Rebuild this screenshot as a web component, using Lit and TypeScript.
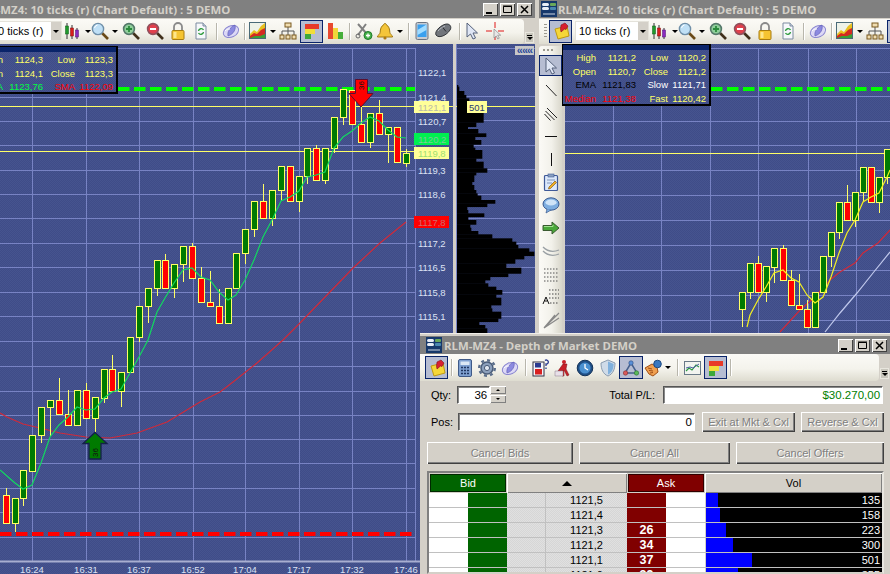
import {LitElement, css, html, svg} from 'lit';
import {customElement} from 'lit/decorators.js';
import {classMap} from 'lit/directives/class-map.js';

type Candle = [number, number, number, number?, number?];
type Tool = {i?: string; w: number; sep?: boolean; drop?: boolean; on?: boolean};

// x, body top, body bottom, wick high, wick low (page pixels)
const leftGreen: Candle[] = [
  [15, 498, 523, 0, 532], [23, 470, 498, 0, 506], [32, 435, 471], [41, 407, 435, 0, 443],
  [50, 400, 407, 0, 436], [77, 390, 425], [95, 397, 418, 0, 432], [104, 369, 398, 0, 403],
  [121, 372, 391, 0, 407], [130, 337, 372], [139, 306, 337, 0, 342], [148, 288, 306, 0, 323],
  [157, 260, 288, 0, 296], [174, 264, 288, 0, 298], [183, 246, 264, 0, 282], [228, 288, 323],
  [236, 253, 288], [245, 229, 253, 0, 264], [254, 201, 229, 0, 237], [272, 190, 218, 0, 226],
  [281, 166, 190, 0, 201], [299, 176, 201, 0, 212], [307, 148, 176, 0, 184], [325, 148, 180, 0, 184],
  [334, 117, 148, 0, 153], [343, 89, 117, 0, 125], [370, 113, 142, 0, 148], [388, 127, 134, 0, 163],
  [406, 153, 163, 149, 167],
];
const leftRed: Candle[] = [
  [6, 495, 523, 488], [59, 400, 414, 378], [68, 414, 425, 390], [86, 390, 418, 383],
  [112, 369, 391, 355], [165, 260, 288, 254], [192, 246, 278, 243], [201, 278, 302, 267],
  [210, 302, 306, 271], [219, 306, 323, 289], [263, 201, 218, 184], [290, 166, 201],
  [316, 148, 180, 145], [352, 90, 124], [361, 124, 142, 107], [379, 113, 134, 100], [397, 127, 162],
];
const rightGreen: Candle[] = [
  [742, 292, 309, 0, 327], [750, 263, 292, 0, 299], [766, 266, 292, 0, 302], [774, 248, 267, 0, 283],
  [815, 292, 327], [823, 256, 292], [831, 232, 256, 0, 267], [839, 202, 232, 0, 239],
  [855, 192, 220, 0, 227], [863, 167, 192, 0, 202], [879, 177, 202, 0, 213], [887, 149, 177, 0, 184],
];
const rightRed: Candle[] = [
  [758, 263, 292, 256], [783, 248, 280, 245], [791, 280, 305, 270], [799, 305, 309, 274],
  [807, 309, 327, 300], [847, 202, 220, 185], [871, 167, 202],
];

const leftEma = '0,470 15,483 23,489 32,485 41,463 50,437 59,425 68,417 77,407 86,410 95,409 104,398 112,392 121,389 130,373 139,357 148,340 157,312 165,298 174,283 183,270 192,268 201,277 210,280 219,292 228,300 236,295 245,280 254,260 263,237 272,220 281,201 290,197 299,191 307,177 316,175 325,172 334,148 343,137 352,131 361,123 370,117 379,121 388,130 397,137 406,138';
const leftSma = '0,413 7,417 23,424 40,428 60,433 86,437 110,438 137,433 167,422 200,402 220,392 233,382 257,363 283,340 300,323 327,295 353,268 380,243 406,222';
const rightEma = '747,327 750,315 758,300 766,287 774,273 783,270 791,278 799,282 807,295 815,303 823,297 831,277 839,253 847,233 855,220 863,202 871,197 879,193 887,177 890,170';
const rightRedLine = '780,332 800,310 815,297 830,280 840,272 855,263 863,253 878,243 890,230';
const rightWhite = '825,332 840,313 857,293 873,273 890,252';

const priceTicks: [number, string][] = [
  [72, '1122,1'], [97, '1121,4'], [121, '1120,7'], [170, '1119,3'], [194, '1118,6'],
  [243, '1117,2'], [267, '1116,5'], [292, '1115,8'], [316, '1115,1'],
];
const priceFlags: [number, string, string, string][] = [
  [101, '1121,1', '#ffff99', '#b9b9a8'], [133, '1120,2', '#00f050', '#7ec89a'],
  [147, '1119,8', '#ffff99', '#a0e070'], [216, '1117,8', '#ff0000', '#d06a6a'],
];
const timeTicks: [number, string][] = [
  [32, '16:24'], [86, '16:31'], [139, '16:37'], [193, '16:52'],
  [245, '17:04'], [299, '17:17'], [352, '17:32'], [406, '17:46'],
];
const leftHLines = [48, 72, 97, 121, 145, 170, 194, 218, 243, 267, 292, 316, 341, 366, 391, 415, 439, 463, 488, 512, 537];
const rightHLines = [48, 72, 96, 121, 145, 170, 195, 220, 245, 270, 295, 320];
const profileLines = [48, 72, 96, 120, 145, 169, 194, 218, 243, 267, 292, 316];

// bottom edge and right edge of each volume step, in 3x crop pixels
const profile: [number, number][] = [
  [5, 24], [18, 27], [30, 42], [40, 48], [48, 57], [112, 100], [125, 78], [132, 53], [145, 84], [155, 108],
  [165, 75], [178, 93], [188, 70], [195, 75], [220, 96], [230, 78], [250, 100], [262, 111], [270, 78], [290, 72],
  [300, 66], [315, 72], [325, 78], [332, 82], [345, 93], [355, 135], [365, 111], [375, 51], [385, 54], [395, 102],
  [405, 54], [418, 78], [428, 60], [438, 63], [448, 84], [460, 126], [470, 186], [480, 198], [490, 204], [500, 237],
  [512, 252], [522, 222], [535, 195], [548, 168], [565, 213], [575, 174], [585, 120], [595, 105], [605, 114], [615, 138],
  [628, 156], [638, 138], [660, 153], [670, 123], [680, 126], [700, 153], [710, 144], [720, 87], [730, 105], [745, 111],
];

const domRows = [
  {p: '1121,5', a: '', v: 135},
  {p: '1121,4', a: '', v: 158},
  {p: '1121,3', a: '26', v: 223},
  {p: '1121,2', a: '34', v: 300},
  {p: '1121,1', a: '37', v: 501},
  {p: '1121,0', a: '39', v: 355},
];

const icons: Record<string, unknown> = {
  candles: svg`<path d="M3 1v16M8 3v14M13 6v11" stroke="#333"/><rect x="1.5" y="4" width="3" height="8" fill="#1f9a2c" stroke="#0b5a14" stroke-width=".5"/><rect x="6.5" y="6" width="3" height="8" fill="#d81c1c" stroke="#7a0a0a" stroke-width=".5"/><rect x="11.5" y="8" width="3" height="7" fill="#8a2bc0" stroke="#4d1070" stroke-width=".5"/>`,
  mag: svg`<path d="M11 11l6 6" stroke="#6a4a18" stroke-width="2.6"/><circle cx="7" cy="7" r="5.6" fill="#bfe0f6" stroke="#6f8fa8" stroke-width="1.4"/><path d="M3.5 6a4 4 0 0 1 3-3" stroke="#fff" fill="none"/>`,
  zin: svg`<path d="M11 11l6 6" stroke="#40301c" stroke-width="2.6"/><circle cx="7" cy="7" r="5.4" fill="#8fcf9a" stroke="#55786a" stroke-width="1.6"/><path d="M4 7h6M7 4v6" stroke="#2b8a3c" stroke-width="1.8"/>`,
  zout: svg`<path d="M11 11l6 6" stroke="#40301c" stroke-width="2.6"/><circle cx="7" cy="7" r="5.4" fill="#e0404c" stroke="#90505c" stroke-width="1.6"/><path d="M4 7h6" stroke="#fff" stroke-width="2"/>`,
  lock: svg`<path d="M5 9V5a4 4 0 0 1 8 0v4" fill="none" stroke="#8a8a8a" stroke-width="1.8"/><rect x="3" y="8.5" width="12" height="9" rx="1" fill="#f5c431" stroke="#a87c10"/><rect x="4.5" y="10" width="3" height="6" fill="#fde68a"/>`,
  doc: svg`<path d="M4 1h7l3 3v13H4z" fill="#f6f8fb" stroke="#7d8ba0"/><path d="M11 1v3h3" fill="#cdd6e2" stroke="#7d8ba0"/><path d="M6.5 9a2.7 2.7 0 0 1 5-1M11.5 10a2.7 2.7 0 0 1-5 1" fill="none" stroke="#2c9a3a" stroke-width="1.4"/>`,
  disc: svg`<ellipse cx="9" cy="9.5" rx="8" ry="5.6" transform="rotate(-25 9 9.5)" fill="#dcd8f6" stroke="#8a86d0"/><path d="M6 14c-1-4 2-9 7-11 1 4-1 9-7 11z" fill="#8c8ae0" stroke="#5a58b0" stroke-width=".6"/><path d="M3 9c2-2 3-2 5-2" stroke="#fff" fill="none"/>`,
  chart: svg`<rect x=".5" y=".5" width="16" height="16" fill="#eef2e8" stroke="#4a6a78"/><path d="M1 16V12l4-4 3 2 4-6 4-3v15z" fill="#e8c020"/><path d="M1 16v-2l4-3 3 1 4-4 4-2v10z" fill="#d42a20"/><path d="M1 16l5-2 5 0 5-2v4z" fill="#3aa034"/>`,
  hier: svg`<path d="M9 5v4M3 13V9h12v4M9 9v4" stroke="#555" fill="none"/><rect x="6" y="1" width="6" height="4" fill="#f0ddb0" stroke="#7a5a20"/><rect x="1" y="13" width="4" height="4" fill="#f0ddb0" stroke="#7a5a20"/><rect x="7" y="13" width="4" height="4" fill="#f0ddb0" stroke="#7a5a20"/><rect x="13" y="13" width="4" height="4" fill="#f0ddb0" stroke="#7a5a20"/>`,
  colors: svg`<rect x="2" y="2" width="14" height="5" fill="#e83a28"/><rect x="2" y="7" width="10" height="5" fill="#f2de3a"/><rect x="2" y="12" width="6" height="5" fill="#3ca83a"/>`,
  bars: svg`<rect x="2" y="1" width="5" height="16" fill="#e84a30"/><rect x="7" y="6" width="5" height="11" fill="#f2d83a"/><rect x="12" y="10" width="5" height="7" fill="#46ae3a"/>`,
  tool: svg`<path d="M3 2l9 10M11 2L3 13" stroke="#808080" stroke-width="2"/><circle cx="3" cy="14" r="2" fill="none" stroke="#666"/><circle cx="13" cy="13.5" r="4" fill="#46b04a" stroke="#1d7a2a"/><path d="M11 13.5h4M13 11.5v4" stroke="#fff" stroke-width="1.3"/>`,
  bell: svg`<path d="M9 1.5c1 0 1.5 1 1.5 1.6 2.6 1 3 4 3.4 7.4.2 1.6 1.6 2.5 2.6 3.5v1H1.5v-1c1-1 2.4-1.900 2.600-3.500.4-3.400.8-6.400 3.400-7.400C7.500 2.500 8 1.500 9 1.500z" fill="#f4c53a" stroke="#a07a14"/><circle cx="9" cy="16" r="1.600" fill="#b07a10"/>`,
  phone: svg`<rect x="3" y=".5" width="12" height="17" rx="1.500" fill="#c8ccd2" stroke="#6c7480"/><rect x="4.500" y="2.500" width="9" height="12.500" fill="#3aa0ee"/><path d="M4.500 8l9-5.500V8l-9 5z" fill="#a0dcff"/>`,
  mouse: svg`<path d="M2 13C0 9 8 2 13 2c3 0 5 3 3 6-3 5-11 9-14 5z" fill="#72767c" stroke="#33363a"/><path d="M8 4.500l4 5" stroke="#2a2c30"/><path d="M4 9c2-2 4-4 7-5" stroke="#b8bcc2" fill="none"/>`,
  cursor: svg`<path d="M4 1v14l3.500-3 2.500 5 2.500-1-2.500-5h4.500z" fill="#dfe6f5" stroke="#54607a"/>`,
  cross: svg`<path d="M9 0v6M9 12v6M0 9h6M12 9h6" stroke="#e01818"/><path d="M8 7v9l2.200-2 1.600 3 1.500-.8-1.600-3h3z" fill="#e8e8e8" stroke="#8a8a8a" stroke-width=".7"/>`,
  pin: svg`<path d="M3 7l12-3 2 10-11 3z" fill="#f5d638" stroke="#c09a10"/><path d="M9 3l4-2 3 3-2 3.500-1.500-.5L9 10l-.5-3z" fill="#d82030" stroke="#80101c" stroke-width=".6"/>`,
  calc: svg`<rect x="2.500" y=".5" width="13" height="17" rx="1.500" fill="#7fa0d0" stroke="#3f5a88"/><rect x="4.500" y="2.500" width="9" height="3.500" fill="#dce8f5"/><path d="M5 8.500h2M8 8.500h2M11 8.500h2M5 11.500h2M8 11.500h2M11 11.500h2M5 14.500h2M8 14.500h2M11 14.500h2" stroke="#1f3560" stroke-width="1.600"/>`,
  gear: svg`<circle cx="9" cy="9" r="6" fill="#8ca0bc" stroke="#4a5c78" stroke-width="1.500"/><circle cx="9" cy="9" r="7.800" fill="none" stroke="#5c6f8c" stroke-width="2.400" stroke-dasharray="3 3.100"/><circle cx="9" cy="9" r="2.600" fill="#dfe6f0" stroke="#4a5c78"/>`,
  note12: svg`<rect x="2" y="3" width="11" height="14" fill="#f4f4fa" stroke="#334"/><rect x="4" y="4" width="6" height="4.500" fill="#2a3a90"/><rect x="4" y="10" width="7" height="5.500" fill="#d82020"/><path d="M14 1.500a2 2 0 1 1 1 3.500v2M15 8.500v1.500" stroke="#2a3a90" stroke-width="1.300" fill="none"/>`,
  figure: svg`<circle cx="11" cy="3" r="2" fill="#c82028"/><path d="M10 5l-5 7 2 1 2-2v6h2v-6l3 6 2-1-3-6 1-5z" fill="#c82028" stroke="#701014" stroke-width=".5"/><path d="M2 12h8v5H2z" fill="#e8e0e8" stroke="#8a7a8a" stroke-width=".5"/>`,
  clock: svg`<circle cx="9" cy="9" r="7.800" fill="#1f4f86" stroke="#143358"/><circle cx="9" cy="9" r="5.600" fill="#4a90d0"/><path d="M9 5v4l3 2" stroke="#fff" stroke-width="1.300" fill="none"/>`,
  shield: svg`<path d="M9 1l7 3c0 6-2 11-7 13C4 15 2 10 2 4z" fill="#cfdbe8" stroke="#8a9cb0"/><path d="M9 2.500l5.600 2.400C14.500 10 13 13.500 9 15.500z" fill="#7fb0dc"/>`,
  tri: svg`<path d="M9 4L3 14h12z" fill="none" stroke="#46608c" stroke-width="1.500"/><circle cx="9" cy="4" r="2.200" fill="#5a90d8" stroke="#2a4a80" stroke-width=".6"/><circle cx="3.500" cy="14" r="2.200" fill="#d85a5a" stroke="#803030" stroke-width=".6"/><circle cx="14.500" cy="14" r="2.200" fill="#5ab85a" stroke="#2a7030" stroke-width=".6"/>`,
  hand: svg`<path d="M1 9l7-4 5 3 1 5-5 4-4-2z" fill="#f0a050" stroke="#a05018"/><path d="M4 9l4 1M5 11.500l4 .5M6 14l3-.5" stroke="#a05018"/><circle cx="13.500" cy="5" r="3.800" fill="#3a78c0" stroke="#1f4a80"/>`,
  line: svg`<rect x=".5" y="2.500" width="16" height="13" fill="#f2f4f0" stroke="#6a7a88"/><path d="M2 12l3-3 3 2 4-5 3 2" fill="none" stroke="#2a9a40" stroke-width="1.200"/><path d="M2 9l4-1 3 1 6-4" fill="none" stroke="#4a60a0"/>`,
  dline: svg`<path d="M4 4l10.500 11" stroke="#222"/>`,
  mline: svg`<path d="M5 4l10 10M3.500 7l9 9M2.500 10l6 6.500" stroke="#222"/>`,
  hline: svg`<path d="M3 9.500h12" stroke="#111"/>`,
  vline: svg`<path d="M9.500 3v13" stroke="#111"/>`,
  clip: svg`<rect x="2.500" y="2.500" width="13" height="15" rx="1" fill="#dce8fa" stroke="#3f5a98" stroke-width="1.200"/><rect x="6" y="1" width="6" height="3" fill="#8aa0c0" stroke="#3f5a98" stroke-width=".6"/><path d="M5 7h8M5 10h5" stroke="#7f94b8"/><path d="M7 14l6-6 1.500 1.500-6 6-2 .5z" fill="#f2b020" stroke="#704a10" stroke-width=".6"/>`,
  bubble: svg`<ellipse cx="9" cy="8" rx="8" ry="6.200" fill="#7eaee0" stroke="#3a5a90"/><ellipse cx="9" cy="6.500" rx="5.600" ry="3" fill="#cfe4f8"/><path d="M5 13l-1 4 5-3" fill="#7eaee0" stroke="#3a5a90" stroke-width=".7"/>`,
  arrow: svg`<path d="M1 6.500h9V3l7 6-7 6v-3.500H1z" fill="#4aa83a" stroke="#3a5a30"/><path d="M2 7.500h9V6" stroke="#a0e090" fill="none"/>`,
  curves: svg`<path d="M1 5c5 5 11 5 16 3M1 9c5 5 11 5 16 3" fill="none" stroke="#9aa0a4" stroke-width="1.300"/>`,
  dots: svg`<path d="M2 4h14M2 8h14M2 12h14M2 16h14" stroke="#555" stroke-dasharray="1.500 1.500"/>`,
  fib: svg`<path d="M7 2h10M7 6h10M7 10h10" stroke="#444" stroke-dasharray="1.500 1.500"/><path d="M1 16l3-7 3 7M2.500 13h3" fill="none" stroke="#111"/><path d="M8 15h9" stroke="#444" stroke-dasharray="1.500 1.500"/>`,
  fan: svg`<path d="M2 17L17 2M2 17L17 7M2 17l11-13" stroke="#888" stroke-width="1.200"/>`,
};

const chartTools: Tool[] = [
  {i: 'candles', w: 25, drop: true}, {i: 'mag', w: 29, drop: true}, {i: 'zin', w: 24}, {i: 'zout', w: 23},
  {i: 'lock', w: 23}, {i: 'doc', w: 23}, {sep: true, w: 8}, {i: 'disc', w: 21}, {sep: true, w: 7},
  {i: 'chart', w: 28, drop: true}, {i: 'hier', w: 24}, {i: 'colors', w: 23, on: true}, {i: 'bars', w: 23},
  {sep: true, w: 6}, {i: 'tool', w: 23}, {i: 'bell', w: 29, drop: true}, {sep: true, w: 8},
  {i: 'phone', w: 20}, {i: 'mouse', w: 22}, {sep: true, w: 10}, {i: 'cursor', w: 16}, {i: 'cross', w: 30},
];
const domTools: Tool[] = [
  {i: 'pin', w: 23, on: true}, {sep: true, w: 6}, {i: 'calc', w: 21}, {i: 'gear', w: 23}, {i: 'disc', w: 23},
  {sep: true, w: 8}, {i: 'note12', w: 21}, {i: 'figure', w: 23}, {i: 'clock', w: 24}, {i: 'shield', w: 22},
  {i: 'tri', w: 24, on: true}, {i: 'hand', w: 29, drop: true}, {sep: true, w: 10}, {i: 'line', w: 22},
  {i: 'colors', w: 23, on: true}, {sep: true, w: 6},
];
const drawTools = ['dline', 'mline', 'hline', 'vline', 'clip', 'bubble', 'arrow', 'curves', 'dots', 'fib', 'fan'];

const icon = (name: string) =>
  html`<svg class="ico" viewBox="0 0 18 18">${icons[name]}</svg>`;

const candle = ([x, top, bot, hi, lo]: Candle, fill: string) => {
  const cx = Math.round(x) + 0.5;
  return svg`
    <path d="M${cx} ${hi || top}V${lo || bot}" class="wick"/>
    <rect class="body" x=${cx - 3} y=${top + 0.5} width="6" height=${bot - top} fill=${fill}/>`;
};

@customElement('app-root')
export class AppRoot extends LitElement {
  static styles = css`
    :host {
      display: block;
      position: relative;
      width: 890px;
      height: 574px;
      overflow: hidden;
      background: #d4d0c8;
      font: 11px 'Liberation Sans', Arial, sans-serif;
      color: #000;
    }

    svg {
      display: block;
    }

    .window {
      position: absolute;
      top: 0;
      display: flex;
      flex-direction: column;
      overflow: hidden;
      background: #d4d0c8;
    }

    .w-left {
      left: 0;
      width: 535px;
      height: 574px;
    }

    .w-right {
      left: 539px;
      width: 351px;
      height: 333px;
    }

    .w-dom {
      left: 420px;
      top: 333px;
      width: 470px;
      height: 241px;
      padding-top: 2px;
      box-sizing: border-box;
      border-top: 1px solid #f0eee8;
    }

    .title {
      flex: none;
      display: flex;
      align-items: center;
      height: 18px;
      background: #808080;
      color: #d4d0c8;
      font: bold 11.4px 'Open Sans', 'Liberation Sans', sans-serif;
      white-space: nowrap;
      overflow: hidden;
    }

    .title-clip {
      margin-left: -28px;
    }

    .logo {
      flex: none;
      width: 16px;
      height: 16px;
      margin: 0 1px 0 2px;
    }

    .w-dom .logo {
      margin: 0 2px 0 6px;
    }

    .caps {
      margin-left: auto;
      display: flex;
      padding-right: 3px;
    }

    .cap {
      width: 15px;
      height: 13px;
      margin-left: 2px;
      background: #d4d0c8;
      box-shadow: inset 1px 1px 0 #fff, inset -1px -1px 0 #404040;
    }

    .toolbar {
      flex: none;
      display: flex;
      align-items: center;
      height: 26px;
      background: #d4d0c8;
    }

    .strip {
      display: flex;
      align-items: center;
      height: 25px;
      background: linear-gradient(#fbfaf6, #f4f3ec 55%, #dedcd0);
      border-radius: 0 4px 4px 0;
    }

    .w-left .strip {
      width: 524px;
      padding-left: 0;
    }

    .w-right .strip {
      width: 351px;
      padding-left: 5px;
      border-radius: 0;
    }

    .w-dom .strip {
      width: 454px;
      padding-left: 5px;
      height: 27px;
    }

    .w-dom .toolbar {
      height: 27px;
    }

    .grip {
      flex: none;
      width: 3px;
      height: 14px;
      margin-right: 2px;
      background: repeating-linear-gradient(#9c9a90 0 1px, transparent 1px 3px);
    }

    .btn {
      flex: none;
      display: flex;
      align-items: center;
      justify-content: center;
      gap: 3px;
      height: 23px;
      box-sizing: border-box;
    }

    .btn.on {
      background: #b6bdd2;
      border: 1px solid #0a246a;
    }

    .ico {
      flex: none;
      width: 18px;
      height: 18px;
    }

    .caret {
      flex: none;
      width: 0;
      height: 0;
      border: 3px solid transparent;
      border-top: 3px solid #000;
      border-bottom: 0;
    }

    .sep {
      flex: none;
      display: flex;
      justify-content: center;
    }

    .sep::before {
      content: '';
      width: 1px;
      height: 17px;
      background: #b8b6ac;
      box-shadow: 1px 0 0 #fff;
    }

    .combo {
      flex: none;
      display: flex;
      width: 74px;
      height: 20px;
      margin-right: 3px;
      box-sizing: border-box;
      background: #fff;
      border: 1px solid #e4e2da;
      line-height: 19px;
      font-size: 11px;
      white-space: nowrap;
      overflow: hidden;
    }

    .w-left .combo {
      margin-left: -12px;
    }

    .combo span {
      flex: 1;
      padding-left: 3px;
    }

    .combo i {
      flex: none;
      width: 10px;
      display: flex;
      align-items: center;
      justify-content: center;
      background: #d4d0c8;
    }

    .more {
      flex: none;
      width: 9px;
      height: 11px;
      margin: 12px 0 0 1px;
      background: #c8c6bc;
      border: 1px solid #e8e6de;
      box-sizing: border-box;
      display: flex;
      flex-direction: column;
      align-items: center;
      justify-content: center;
      gap: 1px;
    }

    .more::before {
      content: '';
      width: 5px;
      height: 1px;
      background: #000;
    }

    .body-row {
      flex: 1;
      display: flex;
      min-height: 0;
    }

    .plot {
      position: relative;
      flex: none;
      background: repeating-conic-gradient(#3f4c88 0 25%, #46548f 0 50%) 0 0 / 2px 2px;
    }

    .plot-left {
      width: 453px;
      margin-right: 3px;
    }

    .plot-profile {
      width: 79px;
    }

    .plot-right {
      width: 325px;
      margin-left: 3px;
    }

    .grid line {
      stroke: #7883c4;
      stroke-width: 1;
      shape-rendering: crispEdges;
    }

    .wick {
      stroke: #ffff66;
      stroke-width: 1;
      fill: none;
      shape-rendering: crispEdges;
    }

    .body {
      stroke: #ffff66;
      stroke-width: 1;
      shape-rendering: crispEdges;
    }

    .series {
      fill: none;
      stroke-width: 1.2;
    }

    .hl {
      stroke: #ffff66;
      stroke-width: 1;
      shape-rendering: crispEdges;
    }

    .dash {
      stroke-width: 4;
      stroke-dasharray: 11.5 4.5;
    }

    .tick {
      font: 9.5px 'Liberation Sans', sans-serif;
      fill: #dce2f4;
    }

    .flag {
      font: 9.5px 'Liberation Sans', sans-serif;
    }

    .stamp {
      font: 8px 'Liberation Sans', sans-serif;
      fill: #111;
    }

    .info {
      position: absolute;
      width: 149px;
      box-sizing: border-box;
      border: 1px solid #000;
      border-right-width: 2px;
      border-bottom-width: 2px;
      padding-top: 6px;
      background: repeating-conic-gradient(#3f4c88 0 25%, #46548f 0 50%) 0 0 / 2px 2px;
      font-size: 9.5px;
      line-height: 13.6px;
    }

    .info::before {
      content: '';
      position: absolute;
      top: 0;
      left: 0;
      right: 0;
      height: 5px;
      background: #0a246a;
    }

    .info-row {
      display: grid;
      grid-template-columns: 33px 40px 32px 38px;
      text-align: right;
      white-space: nowrap;
      color: #ffff66;
    }

    .info-left {
      left: -31px;
      top: 2px;
      height: 48px;
    }

    .info-right {
      left: -3px;
      top: 0;
      height: 62px;
    }

    .fg-green {
      color: #00ff40;
    }

    .fg-red {
      color: #ff0000;
    }

    .fg-black {
      color: #000;
    }

    .fg-white {
      color: #fff;
    }

    .collapse {
      position: absolute;
      top: 2px;
      right: 1px;
      width: 19px;
      height: 9px;
      background: #c8c8c8;
      color: #2b4a9a;
      font: bold 11px/8px 'Liberation Sans', sans-serif;
      text-align: center;
      letter-spacing: -1px;
      overflow: hidden;
    }

    .vbar {
      flex: none;
      width: 23px;
      height: 287px;
      margin-top: 2px;
      padding-top: 8px;
      box-sizing: border-box;
      position: relative;
      background: linear-gradient(90deg, #fbfaf6, #f2f1ea 55%, #d8d6ca);
      border-radius: 3px 3px 0 0;
    }

    .vbar::before {
      content: '';
      position: absolute;
      top: 3px;
      left: 4px;
      width: 11px;
      height: 2px;
      background: repeating-linear-gradient(90deg, #9c9a90 0 2px, transparent 2px 4px);
    }

    .vitem {
      height: 23px;
      display: flex;
      align-items: center;
      justify-content: center;
    }

    .vitem.on {
      height: 21px;
      margin-bottom: 2px;
      margin-top: 1px;
      box-sizing: border-box;
      background: #b6bdd2;
      border: 1px solid #0a246a;
    }

    .form {
      padding: 4px 6px 0 6px;
      display: flex;
      flex-direction: column;
    }

    .f-row {
      display: flex;
      align-items: center;
    }

    .f-qty {
      height: 19px;
    }

    .f-pos {
      height: 20px;
      margin-top: 8px;
    }

    .f-cancel {
      height: 22px;
      margin-top: 10px;
      gap: 6px;
      margin-left: 1px;
    }

    .lbl {
      flex: none;
      padding-left: 5px;
      white-space: nowrap;
    }

    .field {
      box-sizing: border-box;
      height: 18px;
      background: #fff;
      border: 1px solid;
      border-color: #555 #fff #fff #555;
      box-shadow: inset 1px 1px 0 #888;
      padding-right: 2px;
      text-align: right;
      line-height: 16px;
      font-size: 11.5px;
    }

    .qty {
      width: 33px;
      margin-left: 6px;
    }

    .spin {
      flex: none;
      width: 16px;
      height: 17px;
      display: flex;
      flex-direction: column;
      gap: 1px;
    }

    .spin i {
      flex: 1;
      display: flex;
      align-items: center;
      justify-content: center;
      background: #d4d0c8;
      box-shadow: inset 1px 1px 0 #fff, inset -1px -1px 0 #808080;
    }

    .tri-up,
    .tri-dn {
      width: 0;
      height: 0;
      border: 2px solid transparent;
    }

    .tri-up {
      border-bottom: 2px solid #000;
      border-top: 0;
    }

    .tri-dn {
      border-top: 2px solid #000;
      border-bottom: 0;
    }

    .total-lbl {
      margin-left: 98px;
    }

    .total {
      width: 220px;
      margin-left: 8px;
      color: #008000;
    }

    .pos {
      width: 238px;
      margin-left: 5px;
    }

    .cmd {
      flex: none;
      box-sizing: border-box;
      display: flex;
      align-items: center;
      justify-content: center;
      background: #d4d0c8;
      box-shadow: inset 1px 1px 0 #fff, inset -1px -1px 0 #404040, inset -2px -2px 0 #808080;
      color: #808080;
      text-shadow: 1px 1px 0 #fff;
      height: 100%;
      white-space: nowrap;
    }

    .c-exit {
      width: 93px;
      margin-left: 7px;
    }

    .c-rev {
      width: 83px;
      margin-left: 6px;
    }

    .c-bids {
      width: 146px;
    }

    .c-all {
      width: 151px;
    }

    .c-off {
      width: 148px;
    }

    .ladder {
      margin: 7px 6px 0 7px;
      border: 2px solid;
      border-color: #808080 #e8e6e0 transparent #808080;
      overflow: hidden;
      flex: 1;
      background: #d4d0c8;
    }

    .lhead {
      display: grid;
      grid-template-columns: 78px 120px 78px 1fr;
      height: 20px;
    }

    .lhead > div {
      display: flex;
      align-items: center;
      justify-content: center;
      box-shadow: inset 1px 1px 0 #fff, inset -1px -1px 0 #808080;
    }

    .h-bid {
      color: #fff;
      background: #006400;
      box-shadow: inset 0 0 0 1px #002800 !important;
      border: 1px solid #d4d0c8;
    }

    .h-ask {
      color: #fff;
      background: #800000;
      box-shadow: inset 0 0 0 1px #300000 !important;
      border: 1px solid #d4d0c8;
    }

    .sort {
      width: 0;
      height: 0;
      border: 5px solid transparent;
      border-bottom: 5px solid #000;
      border-top: 0;
    }

    .lrow {
      display: grid;
      grid-template-columns: 39px 39px 39px 81px 39px 39px 1fr;
      height: 15px;
      box-sizing: border-box;
      border-bottom: 1px solid #c0c0c0;
      line-height: 14px;
    }

    .c-white {
      background: #fff;
    }

    .c-green {
      background: #006400;
    }

    .c-grey {
      background: repeating-conic-gradient(#d6d6d6 0 25%, #e0e0e0 0 50%) 0 0 / 2px 2px;
      border-right: 1px solid #c0c0c0;
    }

    .c-price {
      background: repeating-conic-gradient(#d6d6d6 0 25%, #e0e0e0 0 50%) 0 0 / 2px 2px;
      text-align: center;
    }

    .c-ask {
      background: #800000;
      color: #fff;
      font-weight: bold;
      font-size: 12.5px;
      text-align: center;
    }

    .c-vol {
      position: relative;
      background: #000;
      color: #fff;
      text-align: right;
      padding-right: 2px;
      margin-left: 1px;
    }

    .c-vol i {
      position: absolute;
      left: 0;
      top: 0;
      bottom: 0;
      background: #0000ff;
    }

    .c-vol span {
      position: relative;
    }

    .pin-gap {
      flex: none;
      width: 3px;
    }

    .btn-pin {
      width: 23px;
    }
  `;

  renderCaps() {
    return html`<div class="caps">
      <div class="cap"><svg width="15" height="13"><path d="M3 10h6" stroke="#000" stroke-width="2"/></svg></div>
      <div class="cap"><svg width="15" height="13"><path d="M3.500 3.500h8v6h-8zM3 3h9" stroke="#000" fill="none"/></svg></div>
      <div class="cap"><svg width="15" height="13"><path d="M4 3l7 7M11 3l-7 7" stroke="#000" stroke-width="1.500"/></svg></div>
    </div>`;
  }

  renderLogo() {
    return html`<svg class="logo" viewBox="0 0 16 16">
      <rect width="16" height="16" fill="#16386a"/>
      <rect x="1" y="2" width="7" height="3" rx="1.500" fill="#e8eef6"/>
      <rect x="1" y="6" width="7" height="3" rx="1.500" fill="#e8eef6"/>
      <rect x="9" y="2" width="6" height="3" rx="1" fill="#6aa85a"/>
      <rect x="9" y="6" width="6" height="3" rx="1" fill="#4a88b0"/>
      <path d="M2 13h12" stroke="#cfd8e4"/>
    </svg>`;
  }

  renderTools(tools: Tool[]) {
    return tools.map((t) =>
      t.sep
        ? html`<div class="sep" style="width:${t.w}px"></div>`
        : html`<div class=${classMap({btn: true, on: !!t.on})} style="width:${t.w}px">
            ${icon(t.i!)}${t.drop ? html`<span class="caret"></span>` : ''}
          </div>`
    );
  }

  renderCombo() {
    return html`<div class="combo"><span>10 ticks (r)</span><i><b class="caret"></b></i></div>`;
  }

  renderLeftChart() {
    return html`<svg width="453" height="530" viewBox="0 44 453 530">
      <g class="grid">
        ${leftHLines.map((y) => svg`<line x1="0" x2="415" y1=${y + 0.5} y2=${y + 0.5}/>`)}
        ${timeTicks.map(([x]) => svg`<line x1=${x + 0.5} x2=${x + 0.5} y1="48" y2="561"/>`)}
        <line x1="415.5" x2="415.5" y1="48" y2="561"/>
      </g>
      <path d="M0 561.500H453" stroke="#a8aed0" stroke-width="2"/>
      <path class="hl" d="M0 106.500H453M0 151.500H415"/>
      <polyline class="series" stroke="#d02a3a" points=${leftSma}/>
      <path class="dash" stroke="#ff0000" d="M0 534H415"/>
      <path class="dash" stroke="#00ff00" d="M118 89H415"/>
      ${leftGreen.map((c) => candle(c, '#007a00'))}
      ${leftRed.map((c) => candle(c, '#ff0000'))}
      <polyline class="series" stroke="#12d860" points=${leftEma}/>
      <path d="M355.500 79.500h12v14h5.500l-12 13.500-12-13.500h6.500z" fill="#ff0000" stroke="#5a1030"/>
      <text class="stamp" transform="translate(364 90) rotate(-90)">36</text>
      <path d="M95 432.500l12 11h-6v15.500h-12v-15.500h-6z" fill="#007a00" stroke="#14204a" stroke-width="1.300"/>
      <text class="stamp" transform="translate(98 457) rotate(-90)">36</text>
      ${priceTicks.map(([y, t]) => svg`<text class="tick" x="418" y=${y + 4}>${t}</text>`)}
      ${priceFlags.map(([y, t, bg, fg]) => svg`
        <rect x="414" y=${y} width="35" height="12" fill=${bg}/>
        <text class="flag" x="418" y=${y + 9.500} fill=${fg}>${t}</text>`)}
      ${timeTicks.map(([x, t]) => svg`<text class="tick" x=${x} y="573" text-anchor="middle">${t}</text>`)}
    </svg>`;
  }

  renderProfile() {
    const start = (y: number) => 85 + y / 3;
    return html`<svg width="79" height="530" viewBox="456 44 79 530">
      <g class="grid">
        ${profileLines.map((y) => svg`<line x1="456" x2="535" y1=${y + 0.5} y2=${y + 0.5}/>`)}
        <line x1="456.500" x2="456.500" y1="44" y2="340"/>
      </g>
      <path class="hl" d="M456 106.500H535"/>
      ${profile.map(([end, right], i) => {
        const top = i ? profile[i - 1][0] : 0;
        return svg`<rect x="457" y=${start(top)} width=${(right - 20) / 3} height=${(end - top) / 3 + 0.4} fill="#000"/>`;
      })}
      <rect x="467" y="101" width="20" height="12" fill="#ffff99"/>
      <text class="flag" x="469" y="110.500" fill="#2a3a70">501</text>
    </svg>`;
  }

  renderRightChart() {
    const vlines = [613, 661, 710, 758, 808, 856];
    return html`<svg width="325" height="289" viewBox="565 44 325 289">
      <g class="grid">
        ${rightHLines.map((y) => svg`<line x1="565" x2="890" y1=${y + 0.5} y2=${y + 0.5}/>`)}
        ${vlines.map((x) => svg`<line x1=${x + 0.5} x2=${x + 0.5} y1="48" y2="333"/>`)}
      </g>
      <path class="hl" d="M565 153.500H890"/>
      <polyline class="series" stroke="#d02a3a" points=${rightRedLine}/>
      <polyline class="series" stroke="#c0c8ec" points=${rightWhite}/>
      <path class="dash" stroke="#00ff00" d="M711 89H890"/>
      ${rightGreen.map((c) => candle(c, '#007a00'))}
      ${rightRed.map((c) => candle(c, '#ff0000'))}
      <polyline class="series" stroke="#f4f020" points=${rightEma}/>
    </svg>`;
  }

  renderDepth() {
    return html`<div class="ladder">
      <div class="lhead">
        <div class="h-bid">Bid</div>
        <div><span class="sort"></span></div>
        <div class="h-ask">Ask</div>
        <div>Vol</div>
      </div>
      ${domRows.map(
        (r) => html`<div class="lrow">
          <div class="c-white"></div>
          <div class="c-green"></div>
          <div class="c-grey"></div>
          <div class="c-price">${r.p}</div>
          <div class="c-ask">${r.a}</div>
          <div class="c-white"></div>
          <div class="c-vol">
            <i style="width:${Math.round(r.v * 0.0915)}px"></i>
            <span>${r.v}</span>
          </div>
        </div>`
      )}
    </div>`;
  }

  render() {
    return html`
      <section class="window w-left">
        <div class="title">
          <span class="title-clip">RLM-MZ4: 10 ticks (r) (Chart Default) : 5 DEMO</span>
          ${this.renderCaps()}
        </div>
        <div class="toolbar">
          <div class="strip">
            ${this.renderCombo()} ${this.renderTools(chartTools)}
          </div>
          <div class="more"><span class="caret"></span></div>
        </div>
        <div class="body-row">
          <div class="plot plot-left">
            ${this.renderLeftChart()}
            <div class="info info-left">
              <div class="info-row"><span>High</span><span>1124,3</span><span>Low</span><span>1123,3</span></div>
              <div class="info-row"><span>Open</span><span>1124,1</span><span>Close</span><span>1123,3</span></div>
              <div class="info-row fg-green"><span>EMA</span><span>1123,76</span><span class="fg-red">SMA</span><span class="fg-red">1122,09</span></div>
            </div>
          </div>
          <div class="plot plot-profile">
            ${this.renderProfile()}
            <div class="collapse">«««</div>
          </div>
        </div>
      </section>

      <section class="window w-right">
        <div class="title">
          ${this.renderLogo()}
          <span>RLM-MZ4: 10 ticks (r) (Chart Default) : 5 DEMO</span>
        </div>
        <div class="toolbar">
          <div class="strip">
            <span class="grip"></span>
            <div class="btn btn-pin on">${icon('pin')}</div>
            <span class="pin-gap"></span>
            ${this.renderCombo()} ${this.renderTools(chartTools)}
          </div>
        </div>
        <div class="body-row">
          <div class="vbar">
            <div class="vitem on">${icon('cursor')}</div>
            ${drawTools.map((t) => html`<div class="vitem">${icon(t)}</div>`)}
          </div>
          <div class="plot plot-right">
            ${this.renderRightChart()}
            <div class="info info-right">
              <div class="info-row"><span>High</span><span>1121,2</span><span>Low</span><span>1120,2</span></div>
              <div class="info-row"><span>Open</span><span>1120,7</span><span>Close</span><span>1121,2</span></div>
              <div class="info-row"><span class="fg-black">EMA</span><span class="fg-black">1121,83</span><span class="fg-white">Slow</span><span class="fg-white">1121,71</span></div>
              <div class="info-row"><span class="fg-red">Median</span><span class="fg-red">1121,38</span><span>Fast</span><span>1120,42</span></div>
            </div>
          </div>
        </div>
      </section>

      <section class="window w-dom">
        <div class="title">
          ${this.renderLogo()}
          <span>RLM-MZ4 - Depth of Market DEMO</span>
          ${this.renderCaps()}
        </div>
        <div class="toolbar">
          <div class="strip">${this.renderTools(domTools)}</div>
          <div class="more"><span class="caret"></span></div>
        </div>
        <div class="form">
          <div class="f-row f-qty">
            <span class="lbl">Qty:</span>
            <div class="field qty">36</div>
            <div class="spin">
              <i><b class="tri-up"></b></i>
              <i><b class="tri-dn"></b></i>
            </div>
            <span class="lbl total-lbl">Total P/L:</span>
            <div class="field total">$30.270,00</div>
          </div>
          <div class="f-row f-pos">
            <span class="lbl">Pos:</span>
            <div class="field pos">0</div>
            <div class="cmd c-exit">Exit at Mkt &amp; Cxl</div>
            <div class="cmd c-rev">Reverse &amp; Cxl</div>
          </div>
          <div class="f-row f-cancel">
            <div class="cmd c-bids">Cancel Bids</div>
            <div class="cmd c-all">Cancel All</div>
            <div class="cmd c-off">Cancel Offers</div>
          </div>
        </div>
        ${this.renderDepth()}
      </section>
    `;
  }
}
